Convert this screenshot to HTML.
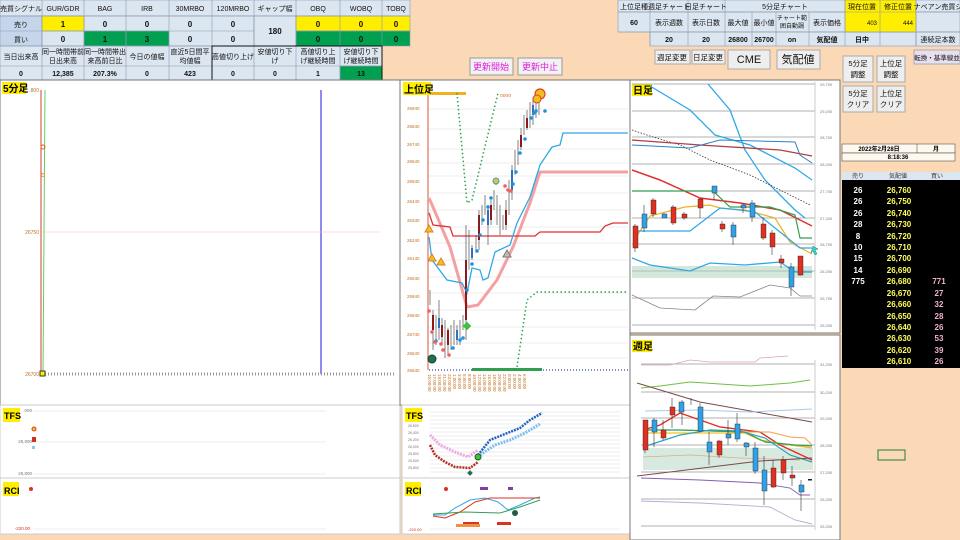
<!DOCTYPE html>
<html><head><meta charset="utf-8"><style>
html,body{margin:0;padding:0;background:#fcd9b6;}
svg{display:block;font-family:"Liberation Sans","Noto Sans CJK JP",sans-serif;}
</style></head><body>
<svg width="960" height="540" viewBox="0 0 960 540" xmlns="http://www.w3.org/2000/svg">
<rect width="960" height="540" fill="#fcd9b6"/>
<!-- ===== Top-left table ===== -->
<g stroke="#8a9ab0" stroke-width="0.6" font-size="7.5" text-anchor="middle">
<rect x="0" y="0" width="410" height="16" fill="#dce6f1"/>
<rect x="0" y="16" width="42" height="30" fill="#c5d5ea"/>
<rect x="42" y="16" width="212" height="30" fill="#dce6f1"/>
<rect x="42" y="16" width="42" height="15" fill="#ffee00"/>
<rect x="84" y="31" width="42" height="15" fill="#00a050"/>
<rect x="126" y="31" width="43" height="15" fill="#00a050"/>
<rect x="254" y="16" width="42" height="30" fill="#dce6f1"/>
<rect x="296" y="16" width="114" height="15" fill="#ffee00"/>
<rect x="296" y="31" width="114" height="15" fill="#00a050"/>
<rect x="0" y="46" width="382" height="34" fill="#dce6f1"/>
<rect x="340" y="66" width="42" height="14" fill="#00a050"/>
<path d="M0 16H410M0 31H254M296 31H410M0 46H382M0 66H382M42 0V80M84 0V80M126 0V80M169 0V80M212 0V80M254 0V80M296 0V80M340 0V80M382 0V80" fill="none"/>
<rect x="212" y="46" width="170" height="34" fill="none" stroke="#111" stroke-width="1"/>
</g>
<g font-size="7" text-anchor="middle" fill="#111">
<text x="21" y="11">売買シグナル</text><text x="63" y="11">GUR/GDR</text><text x="105" y="11">BAG</text><text x="147" y="11">IRB</text><text x="190" y="11">30MRBO</text><text x="233" y="11">120MRBO</text><text x="275" y="11">ギャップ幅</text><text x="318" y="11">OBQ</text><text x="361" y="11">WOBQ</text><text x="396" y="11">TOBQ</text>
<text x="21" y="27">売り</text><text x="21" y="42">買い</text>
<g font-weight="bold" font-size="8"><text x="63" y="27">1</text><text x="105" y="27">0</text><text x="147" y="27">0</text><text x="190" y="27">0</text><text x="233" y="27">0</text><text x="275" y="34">180</text><text x="318" y="27">0</text><text x="361" y="27">0</text><text x="396" y="27">0</text>
<text x="63" y="42">0</text><text x="105" y="42">1</text><text x="147" y="42">3</text><text x="190" y="42">0</text><text x="233" y="42">0</text><text x="318" y="42">0</text><text x="361" y="42">0</text><text x="396" y="42">0</text></g>
<text x="21" y="59">当日出来高</text><text x="63" y="54">同一時間帯前</text><text x="63" y="63">日出来高</text><text x="105" y="54">同一時間帯出</text><text x="105" y="63">来高前日比</text><text x="147" y="59">今日の値幅</text><text x="190" y="54">直近5日間平</text><text x="190" y="63">均値幅</text><text x="233" y="59">高値切り上げ</text><text x="275" y="54">安値切り下</text><text x="275" y="63">げ</text><text x="318" y="54">高値切り上</text><text x="318" y="63">げ継続時間</text><text x="361" y="54">安値切り下</text><text x="361" y="63">げ継続時間</text>
<g font-weight="bold" font-size="7"><text x="21" y="76">0</text><text x="63" y="76">12,385</text><text x="105" y="76">207.3%</text><text x="147" y="76">0</text><text x="190" y="76">423</text><text x="233" y="76">0</text><text x="275" y="76">0</text><text x="318" y="76">1</text><text x="361" y="76">13</text></g>
</g>
<!-- update buttons -->
<g font-size="9" text-anchor="middle" fill="#e020e0">
<rect x="470" y="58" width="43" height="17" fill="#f2f2f2" stroke="#999"/><text x="491" y="70">更新開始</text>
<rect x="518" y="58" width="44" height="17" fill="#f2f2f2" stroke="#999"/><text x="540" y="70">更新中止</text>
</g>
<!-- ===== Top-right table ===== -->
<g stroke="#8a9ab0" stroke-width="0.6">
<rect x="618" y="0" width="342" height="12" fill="#dce6f1"/>
<rect x="618" y="12" width="342" height="20" fill="#dce6f1"/>
<rect x="650" y="32" width="266" height="14" fill="#dce6f1"/>
<rect x="916" y="32" width="44" height="14" fill="#dce6f1"/>
<rect x="845" y="0" width="71" height="32" fill="#ffee00"/>
<path d="M618 12H960M618 32H960M650 0V46M688 0V46M725 0V46M752 12V46M776 12V46M809 12V46M845 0V46M880 0V46M916 0V46" fill="none"/>
</g>
<g font-size="7" text-anchor="middle" fill="#111">
<text x="634" y="9">上位足種</text><text x="669" y="9">週足チャート</text><text x="706" y="9">日足チャート</text><text x="785" y="9">5分足チャート</text><text x="862" y="9">現在位置</text><text x="898" y="9">修正位置</text><text x="938" y="9">ナベアン売買シ</text>
<text x="634" y="25" font-weight="bold">60</text><text x="669" y="25">表示週数</text><text x="706" y="25">表示日数</text><text x="738" y="25">最大値</text><text x="764" y="25">最小値</text><text x="792" y="20" font-size="6">チャート範</text><text x="792" y="28" font-size="6">囲自動調</text><text x="827" y="25">表示価格</text><text x="877" y="25" text-anchor="end" font-size="6">403</text><text x="913" y="25" text-anchor="end" font-size="6">444</text>
<g font-weight="bold"><text x="669" y="42">20</text><text x="706" y="42">20</text><text x="738" y="42">26800</text><text x="764" y="42">26700</text><text x="792" y="42">on</text><text x="827" y="42">気配値</text><text x="862" y="42">日中</text></g><text x="938" y="42">連続足本数</text>
</g>
<g font-size="7.5" text-anchor="middle" fill="#111">
<rect x="655" y="50" width="35" height="14" fill="#eee" stroke="#aaa"/><text x="672" y="60">週足変更</text>
<rect x="692" y="50" width="33" height="14" fill="#eee" stroke="#aaa"/><text x="708" y="60">日足変更</text>
<rect x="728" y="50" width="42" height="19" fill="#eee" stroke="#aaa"/><text x="749" y="63" font-size="11">CME</text>
<rect x="777" y="50" width="43" height="19" fill="#eee" stroke="#aaa"/><text x="798" y="63" font-size="11">気配値</text>
<rect x="843" y="56" width="30" height="26" fill="#eee" stroke="#aaa"/><text x="858" y="66">5分足</text><text x="858" y="77">調整</text>
<rect x="877" y="56" width="28" height="26" fill="#eee" stroke="#aaa"/><text x="891" y="66">上位足</text><text x="891" y="77">調整</text>
<rect x="843" y="86" width="30" height="26" fill="#eee" stroke="#aaa"/><text x="858" y="96">5分足</text><text x="858" y="107">クリア</text>
<rect x="877" y="86" width="28" height="26" fill="#eee" stroke="#aaa"/><text x="891" y="96">上位足</text><text x="891" y="107">クリア</text>
<rect x="914" y="50" width="46" height="14" fill="#e8e0f0" stroke="#aaa"/><text x="937" y="60" font-size="6.5">転換・基準線並</text>
</g>
<!-- ===== Left 5分足 chart ===== -->
<rect x="0" y="80" width="400" height="325" fill="#fff" stroke="#777"/>
<rect x="2" y="82" width="24" height="12" fill="#ffee00"/><text x="3" y="92" font-size="10" font-weight="bold">5分足</text>
<line x1="41" y1="90" x2="41" y2="374" stroke="#d04030"/>
<line x1="45" y1="90" x2="43" y2="374" stroke="#60d060"/>
<line x1="321" y1="90" x2="321" y2="374" stroke="#4040e0" stroke-width="1.2"/>
<line x1="42" y1="232" x2="380" y2="232" stroke="#f0c0c8" stroke-width="0.6"/>
<line x1="42" y1="374" x2="396" y2="374" stroke="#999" stroke-dasharray="1 2" stroke-width="3"/>
<circle cx="43" cy="147" r="2" fill="none" stroke="#e06020"/><circle cx="43" cy="175" r="1.5" fill="none" stroke="#f0a040"/>
<rect x="40" y="371" width="5" height="5" fill="#ffee00" stroke="#333"/>
<g font-size="5" fill="#c07020" text-anchor="end"><text x="39" y="92">.800</text><text x="39" y="234">26750</text><text x="39" y="376">26700</text></g>
<!-- left TFS -->
<rect x="0" y="405" width="400" height="73" fill="#fff" stroke="#ccc"/>
<rect x="3" y="408" width="17" height="14" fill="#ffee00"/><text x="4" y="419" font-size="9" font-weight="bold">TFS</text>
<path d="M33 411H326M33 442H326M33 474H326" stroke="#ddd" stroke-width="0.6"/>
<g font-size="4.5" fill="#777" text-anchor="end"><text x="32" y="412">.000</text><text x="32" y="443">26,900</text><text x="32" y="475">26,800</text></g>
<circle cx="34" cy="429" r="2" fill="#f0c020" stroke="#e04020"/><rect x="32" y="437" width="4" height="5" fill="#d03020"/><rect x="32" y="446" width="3" height="3" fill="#8cc8f0"/>
<!-- left RCI -->
<rect x="0" y="478" width="400" height="56" fill="#fff" stroke="#ccc"/>
<rect x="3" y="482" width="16" height="14" fill="#ffee00"/><text x="4" y="494" font-size="9" font-weight="bold">RCI</text>
<line x1="33" y1="529" x2="326" y2="529" stroke="#ddd" stroke-width="0.6"/>
<text x="30" y="530" font-size="4.5" fill="#d03020" text-anchor="end">-220.00</text>
<circle cx="31" cy="489" r="2" fill="#e03020"/>
<!-- ===== Middle 上位足 chart ===== -->
<rect x="400" y="80" width="230" height="325" fill="#fff" stroke="#777"/>
<g stroke="#ddd" stroke-width="0.6"><path d="M428 109H628M428 129H628M428 149H628M428 163H628M428 176H628M428 193H628M428 210H628M428 227H628M428 243H628M428 260H628M428 277H628M428 293H628M428 310H628M428 327H628M428 343H628M428 358H628"/></g>
<g font-size="4.5" fill="#c07020"><text x="407" y="110">26940</text><text x="407" y="128">26840</text><text x="407" y="146">26740</text><text x="407" y="163">26640</text><text x="407" y="183">26540</text><text x="407" y="203">26440</text><text x="407" y="222">26340</text><text x="407" y="242">26240</text><text x="407" y="260">26140</text><text x="407" y="280">26040</text><text x="407" y="298">25940</text><text x="407" y="317">25840</text><text x="407" y="336">25740</text><text x="407" y="355">25640</text><text x="407" y="372">25540</text></g>
<line x1="428" y1="92" x2="428" y2="370" stroke="#e07060" stroke-width="1.2"/>
<rect x="403" y="82" width="28" height="13" fill="#ffee00"/><text x="404" y="93" font-size="10" font-weight="bold">上位足</text>
<rect x="431" y="92" width="35" height="3" fill="#f0b020"/>
<polyline points="457,93 467,203 472,200 498,93" fill="none" stroke="#30a050" stroke-width="1.5" stroke-dasharray="1.5 2.5"/>
<polyline points="517,367 527,300 537,292 628,292" fill="none" stroke="#30a050" stroke-width="1.5" stroke-dasharray="1.5 2.5"/>
<polyline points="429,198 433,207 450,247 467,307 478,305 497,280 513,247 530,203 540,172 628,172" fill="none" stroke="#f4a0a0" stroke-width="3"/>
<polyline points="429,213 433,225 450,227 453,236 535,236 540,232 600,232 605,226 613,223 628,223" fill="none" stroke="#e03030" stroke-width="1.3"/>
<polyline points="429,237 432,260 447,280 462,283 467,293 472,268 480,270 483,280 488,278 495,252 510,245 517,223 530,197 540,165 552,147 560,145 563,133 628,133" fill="none" stroke="#30a8e8" stroke-width="1.3"/>
<g stroke="#333" stroke-width="0.6">
<path d="M430 290V305M433 310V350M436 315V345M439 300V340M442 318V345M445 320V358M448 328V355M451 325V350M454 320V345M457 325V345M460 320V345M463 315V330M466 225V340M469 230V270M472 245V260M476 235V250M479 210V250M482 205V225M485 195V215M488 205V245M491 200V225M494 190V210M497 195V225M500 205V235M503 215V230M506 200V230M509 180V215M512 165V200M515 150V175M518 140V165M521 128V150M524 115V135M527 110V130M530 102V128M533 98V125M536 95V118M539 95V115"/>
</g>
<g fill="#8b1a1a"><rect x="432" y="315" width="2" height="15"/><rect x="441" y="325" width="2" height="12"/><rect x="447" y="330" width="2" height="15"/><rect x="465" y="260" width="2" height="60"/><rect x="478" y="215" width="2" height="25"/><rect x="490" y="205" width="2" height="15"/><rect x="505" y="210" width="2" height="15"/><rect x="520" y="135" width="2" height="12"/><rect x="526" y="118" width="2" height="10"/></g>
<g fill="#3070c0"><rect x="438" y="318" width="2" height="10"/><rect x="456" y="330" width="2" height="10"/><rect x="471" y="248" width="2" height="10"/><rect x="487" y="210" width="2" height="15"/><rect x="511" y="170" width="2" height="20"/><rect x="532" y="105" width="2" height="10"/></g>
<g fill="#2090e0"><circle cx="463" cy="338" r="1.8"/><circle cx="467" cy="290" r="1.8"/><circle cx="472" cy="264" r="1.8"/><circle cx="477" cy="251" r="1.8"/><circle cx="480" cy="235" r="1.8"/><circle cx="483" cy="220" r="1.8"/><circle cx="488" cy="207" r="1.8"/><circle cx="491" cy="198" r="1.8"/><circle cx="496" cy="183" r="1.8"/><circle cx="513" cy="184" r="1.8"/><circle cx="516" cy="172" r="1.8"/><circle cx="520" cy="153" r="1.8"/><circle cx="525" cy="139" r="1.8"/><circle cx="531" cy="118" r="1.8"/><circle cx="534" cy="113" r="1.8"/><circle cx="536" cy="111" r="1.8"/><circle cx="545" cy="111" r="1.8"/><circle cx="436" cy="341" r="1.8"/><circle cx="453" cy="348" r="1.8"/><circle cx="460" cy="340" r="1.8"/></g>
<g fill="#f06060"><circle cx="429" cy="311" r="1.8"/><circle cx="432" cy="332" r="1.8"/><circle cx="435" cy="342" r="1.8"/><circle cx="441" cy="344" r="1.8"/><circle cx="443" cy="350" r="1.8"/><circle cx="449" cy="355" r="1.8"/><circle cx="505" cy="186" r="1.8"/><circle cx="508" cy="190" r="1.8"/><circle cx="511" cy="191" r="1.8"/></g>
<circle cx="432" cy="359" r="4" fill="#207050" stroke="#104030"/>
<rect x="464" y="323" width="6" height="6" fill="#40c040" transform="rotate(45 467 326)"/>
<path d="M429 225l4 7h-8z" fill="#f0c020" stroke="#e08020"/><path d="M432 254l4 7h-8z" fill="#f0c020" stroke="#e08020"/><path d="M441 258l4 7h-8z" fill="#f0c020" stroke="#e08020"/><path d="M507 250l4 7h-8z" fill="#c0c0b0" stroke="#777"/>
<circle cx="540" cy="94" r="5" fill="#f0c020" stroke="#e04020" stroke-width="1.2"/><circle cx="537" cy="99" r="4" fill="#f0c020" stroke="#e04020"/>
<circle cx="496" cy="181" r="3" fill="#f0c020" stroke="#30a0e0"/>
<text x="500" y="97" font-size="5" fill="#e07020">oooo</text>
<line x1="429" y1="370" x2="628" y2="370" stroke="#8090c0" stroke-dasharray="1 2" stroke-width="2"/>
<rect x="472" y="368" width="70" height="3" fill="#30a050"/>
<g font-size="4.5" fill="#c07020"><text transform="translate(428,374) rotate(90)">15:00:00</text><text transform="translate(433,374) rotate(90)">17:00:00</text><text transform="translate(438,374) rotate(90)">19:00:00</text><text transform="translate(443,374) rotate(90)">21:00:00</text><text transform="translate(448,374) rotate(90)">23:00:00</text><text transform="translate(453,374) rotate(90)">1:00:00</text><text transform="translate(458,374) rotate(90)">3:00:00</text><text transform="translate(463,374) rotate(90)">5:00:00</text><text transform="translate(468,374) rotate(90)">8:00:00</text><text transform="translate(473,374) rotate(90)">10:00:00</text><text transform="translate(478,374) rotate(90)">12:00:00</text><text transform="translate(483,374) rotate(90)">14:00:00</text><text transform="translate(488,374) rotate(90)">16:00:00</text><text transform="translate(493,374) rotate(90)">18:00:00</text><text transform="translate(498,374) rotate(90)">20:00:00</text><text transform="translate(503,374) rotate(90)">22:00:00</text><text transform="translate(508,374) rotate(90)">0:00:00</text><text transform="translate(513,374) rotate(90)">2:00:00</text><text transform="translate(518,374) rotate(90)">4:00:00</text><text transform="translate(523,374) rotate(90)">6:00:00</text></g>
<!-- middle TFS -->
<rect x="402" y="405" width="228" height="73" fill="#fff" stroke="#ccc"/>
<rect x="405" y="408" width="17" height="14" fill="#ffee00"/><text x="406" y="419" font-size="9" font-weight="bold">TFS</text>
<g stroke="#ddd" stroke-width="0.6"><path d="M430 412H620M430 416H620M430 420H620M430 424H620M430 428H620M430 432H620M430 436H620M430 440H620M430 444H620M430 448H620M430 452H620M430 456H620M430 460H620M430 464H620M430 468H620M430 472H620"/></g>
<g font-size="3.5" fill="#777"><text x="408" y="427">26,600</text><text x="408" y="434">26,400</text><text x="408" y="441">26,200</text><text x="408" y="448">26,000</text><text x="408" y="455">25,800</text><text x="408" y="462">25,600</text><text x="408" y="469">25,800</text></g>
<polyline points="430,435 440,445 455,452 468,457 478,450" fill="none" stroke="#f0a8e0" stroke-width="3" stroke-dasharray="2 1"/>
<polyline points="430,445 435,455 445,462 455,467 470,468 478,462" fill="none" stroke="#b03020" stroke-width="2.5" stroke-dasharray="2 1"/>
<polyline points="478,455 490,440 505,434 520,428 530,420 542,413" fill="none" stroke="#2060c0" stroke-width="2.5" stroke-dasharray="2 1"/>
<polyline points="480,455 495,445 510,440 525,433 540,424" fill="none" stroke="#80c0f0" stroke-width="3" stroke-dasharray="2 1"/>
<circle cx="478" cy="457" r="3" fill="#40c040" stroke="#206020"/><rect x="468" y="471" width="4" height="4" fill="#207050" transform="rotate(45 470 473)"/>
<!-- middle RCI -->
<rect x="402" y="478" width="228" height="56" fill="#fff" stroke="#ccc"/>
<rect x="405" y="482" width="16" height="14" fill="#ffee00"/><text x="406" y="494" font-size="9" font-weight="bold">RCI</text>
<line x1="430" y1="529" x2="620" y2="529" stroke="#ddd" stroke-width="0.6"/>
<text x="408" y="531" font-size="4" fill="#d03020">-220.00</text>
<polyline points="433,515 445,515 455,508 470,500 485,498 498,502 508,510 520,505 535,498 540,497" fill="none" stroke="#30a8e8" stroke-width="1"/>
<polyline points="433,516 445,518 460,512 475,502 490,498 540,498" fill="none" stroke="#e03020" stroke-width="1"/>
<polyline points="433,514 465,512 500,513 520,507 540,500" fill="none" stroke="#30a050" stroke-width="1"/>
<rect x="480" y="487" width="8" height="3" fill="#8040a0"/><rect x="508" y="487" width="5" height="3" fill="#8040a0"/>
<circle cx="446" cy="489" r="2" fill="#e03020"/><circle cx="515" cy="513" r="3" fill="#206040"/>
<rect x="456" y="524" width="24" height="3" fill="#f09040"/><rect x="463" y="522" width="16" height="2" fill="#e03020"/><rect x="497" y="522" width="14" height="3" fill="#e03020"/>
<!-- ===== 日足 chart ===== -->
<rect x="630" y="80" width="210" height="253" fill="#fff" stroke="#777"/>
<rect x="632" y="84" width="20" height="12" fill="#ffee00"/><text x="633" y="94" font-size="10" font-weight="bold">日足</text>
<g stroke="#999" stroke-width="0.8"><path d="M632 84H815M632 111H815M632 137H815M632 164H815M632 191H815M632 218H815M632 244H815M632 271H815M632 298H815M632 325H815"/></g>
<line x1="815" y1="82" x2="815" y2="330" stroke="#ccc"/>
<g font-size="4" fill="#777"><text x="820" y="86">29,700</text><text x="820" y="113">29,200</text><text x="820" y="139">28,700</text><text x="820" y="166">28,200</text><text x="820" y="193">27,700</text><text x="820" y="220">27,200</text><text x="820" y="246">26,700</text><text x="820" y="273">26,200</text><text x="820" y="300">25,700</text><text x="820" y="327">25,200</text></g>
<rect x="632" y="266" width="180" height="12" fill="#a8d0b8" opacity="0.5"/>
<polyline points="708,84 730,110 745,150 765,180 795,210 805,218" fill="none" stroke="#30a8e8" stroke-width="1.3"/>
<polyline points="650,86 690,110 715,135 750,145 795,168 812,180" fill="none" stroke="#30a8e8" stroke-width="1.3"/>
<polyline points="632,130 650,136 680,145 710,160 750,175 810,205" fill="none" stroke="#333" stroke-width="0.8" stroke-dasharray="1.5 1.5"/>
<polyline points="632,140 700,145 780,150 812,156" fill="none" stroke="#b04040" stroke-width="1.3"/>
<polyline points="632,145 690,148 720,140 795,142 800,155 812,163" fill="none" stroke="#3080c0" stroke-width="1"/>
<polyline points="632,170 660,180 700,198 740,203 780,210 812,226" fill="none" stroke="#e03030" stroke-width="1.5"/>
<polyline points="632,191 713,191 730,207 770,207 795,215 800,238 812,238" fill="none" stroke="#30a050" stroke-width="1.2"/>
<polyline points="634,240 650,216 685,207 710,205 720,208 745,210 775,218 790,242 812,254" fill="none" stroke="#f0b020" stroke-width="1.2"/>
<polyline points="634,231 650,231 690,231 720,208 740,210 755,212 790,240 800,248 812,248" fill="none" stroke="#30a8e8" stroke-width="1.3"/>
<polyline points="632,258 650,265 690,271 710,263 745,265 780,262 795,272 812,272" fill="none" stroke="#30a8e8" stroke-width="1.3"/>
<polyline points="632,295 660,308 695,310 713,296 740,297 770,285 790,288 800,296 812,296" fill="none" stroke="#8a8090" stroke-width="0.8"/>
<g stroke="#333" stroke-width="0.6"><path d="M635 224V252M644 205V232M653 198V217M664 213V218M673 205V225M684 212V220M700 198V218M714 186V200M722 221V232M733 222V245M743 203V213M752 200V222M763 217V240M772 230V255M781 255V268M791 263V296M800 256V276"/></g>
<g fill="#e03020" stroke="#222" stroke-width="0.4"><rect x="633" y="226" width="5" height="22"/><rect x="651" y="200" width="5" height="14"/><rect x="671" y="207" width="5" height="16"/><rect x="682" y="214" width="5" height="4"/><rect x="698" y="199" width="5" height="9"/><rect x="720" y="224" width="5" height="5"/><rect x="761" y="224" width="5" height="14"/><rect x="770" y="233" width="5" height="14"/><rect x="779" y="259" width="5" height="4"/><rect x="798" y="256" width="5" height="19"/></g>
<g fill="#30a0e8" stroke="#222" stroke-width="0.4"><rect x="642" y="214" width="5" height="14"/><rect x="662" y="214" width="5" height="4"/><rect x="712" y="186" width="5" height="7"/><rect x="731" y="225" width="5" height="12"/><rect x="741" y="205" width="5" height="3"/><rect x="750" y="203" width="5" height="14"/><rect x="789" y="267" width="5" height="20"/></g>
<path d="M813 246l5 3-3 1 2 4-2 1-2-4-2 2z" fill="#40d0c0" stroke="#208080" stroke-width="0.5"/>
<!-- ===== 週足 chart ===== -->
<rect x="630" y="335" width="210" height="205" fill="#fff" stroke="#777"/>
<rect x="632" y="340" width="20" height="12" fill="#ffee00"/><text x="633" y="350" font-size="10" font-weight="bold">週足</text>
<g stroke="#999" stroke-width="0.8"><path d="M641 364H815M641 392H815M641 418H815M641 445H815M641 472H815M641 499H815M641 526H815"/></g>
<line x1="815" y1="360" x2="815" y2="530" stroke="#ccc"/>
<g font-size="4" fill="#777"><text x="820" y="366">31,200</text><text x="820" y="394">30,200</text><text x="820" y="420">29,200</text><text x="820" y="447">28,200</text><text x="820" y="474">27,200</text><text x="820" y="501">26,200</text><text x="820" y="528">25,200</text></g>
<rect x="643" y="448" width="170" height="22" fill="#a8d0b8" opacity="0.45"/>
<polyline points="641,365 670,365 690,360 710,362 755,362 760,358 788,356" fill="none" stroke="#e0a0b0" stroke-width="0.8"/>
<polyline points="641,388 660,386 690,382 750,386 790,383 810,380" fill="none" stroke="#70c040" stroke-width="1"/>
<polyline points="637,383 700,402 812,422" fill="none" stroke="#7a4a4a" stroke-width="1"/>
<polyline points="645,411 700,410 750,412 812,409" fill="none" stroke="#a8c8e8" stroke-width="1"/>
<polyline points="643,430 660,425 680,413 700,420 720,427 760,432 780,445 812,460" fill="none" stroke="#e03020" stroke-width="1.4"/>
<polyline points="643,430 680,430 740,432 770,432 790,437 805,438 812,445" fill="none" stroke="#f0a040" stroke-width="1"/>
<polyline points="643,433 700,433 745,433 760,440 790,445 812,448" fill="none" stroke="#f0c020" stroke-width="1.3"/>
<polyline points="643,430 680,430 745,432 765,442 795,445 812,446" fill="none" stroke="#30a050" stroke-width="1.2"/>
<polyline points="643,447 680,435 710,430 740,431 765,438 790,455 812,462" fill="none" stroke="#30a0b8" stroke-width="1.2"/>
<polyline points="643,457 690,455 740,458 800,460" fill="none" stroke="#d0b090" stroke-width="0.8"/>
<polyline points="637,476 760,461 812,458" fill="none" stroke="#7a4a4a" stroke-width="1"/>
<polyline points="641,478 700,480 760,483 790,488 800,495 810,495" fill="none" stroke="#8060b0" stroke-width="0.9"/>
<polyline points="641,501 700,503 770,507 795,520 812,524" fill="none" stroke="#b0b0d8" stroke-width="0.9"/>
<g stroke="#333" stroke-width="0.6"><path d="M645 420V453M654 418V447M663 420V440M672 398V428M682 400V425M691 398V405M700 403V432M709 432V465M719 440V458M728 420V445M737 413V442M746 442V456M755 442V474M764 456V505M773 460V488M783 456V480M792 466V486M801 480V511"/></g>
<g fill="#e03020" stroke="#222" stroke-width="0.4"><rect x="643" y="420" width="5" height="30"/><rect x="661" y="430" width="5" height="8"/><rect x="670" y="407" width="5" height="8"/><rect x="717" y="441" width="5" height="14"/><rect x="771" y="468" width="5" height="19"/><rect x="781" y="460" width="5" height="13"/><rect x="790" y="475" width="5" height="3"/></g>
<g fill="#30a0e8" stroke="#222" stroke-width="0.4"><rect x="652" y="420" width="5" height="12"/><rect x="679" y="402" width="5" height="10"/><rect x="698" y="407" width="5" height="24"/><rect x="707" y="442" width="5" height="10"/><rect x="726" y="434" width="5" height="4"/><rect x="735" y="424" width="5" height="15"/><rect x="744" y="443" width="5" height="4"/><rect x="753" y="448" width="5" height="23"/><rect x="762" y="470" width="5" height="21"/><rect x="799" y="485" width="5" height="7"/></g>
<rect x="808" y="479" width="4" height="1.5" fill="#222"/>
<!-- ===== order book ===== -->
<rect x="842" y="144" width="113" height="9" fill="#fff8ee" stroke="#555" stroke-width="0.6"/>
<line x1="917" y1="144" x2="917" y2="153" stroke="#555" stroke-width="0.6"/>
<rect x="842" y="153" width="113" height="8" fill="#fff8ee" stroke="#555" stroke-width="0.6"/>
<g font-size="6" font-weight="bold" text-anchor="middle"><text x="879" y="151">2022年2月28日</text><text x="936" y="151">月</text><text x="898" y="159">8:18:36</text></g>
<rect x="842" y="172" width="118" height="196" fill="#000"/>
<rect x="842" y="172" width="118" height="8" fill="#dce6f1"/>
<g font-size="6" text-anchor="middle" fill="#333"><text x="858" y="178">売り</text><text x="898" y="178">気配値</text><text x="937" y="178">買い</text></g>
<g font-size="8" font-weight="bold" text-anchor="middle">
<g fill="#fff"><text x="858" y="193">26</text><text x="858" y="204">26</text><text x="858" y="216">26</text><text x="858" y="227">28</text><text x="858" y="239">8</text><text x="858" y="250">10</text><text x="858" y="261">15</text><text x="858" y="273">14</text><text x="858" y="284">775</text></g>
<g fill="#ffff60"><text x="899" y="193">26,760</text><text x="899" y="204">26,750</text><text x="899" y="216">26,740</text><text x="899" y="227">26,730</text><text x="899" y="239">26,720</text><text x="899" y="250">26,710</text><text x="899" y="261">26,700</text><text x="899" y="273">26,690</text><text x="899" y="284">26,680</text><text x="899" y="296">26,670</text><text x="899" y="307">26,660</text><text x="899" y="319">26,650</text><text x="899" y="330">26,640</text><text x="899" y="341">26,630</text><text x="899" y="353">26,620</text><text x="899" y="364">26,610</text></g>
<g fill="#f0b0d0"><text x="939" y="284">771</text><text x="939" y="296">27</text><text x="939" y="307">32</text><text x="939" y="319">28</text><text x="939" y="330">26</text><text x="939" y="341">53</text><text x="939" y="353">39</text><text x="939" y="364">26</text></g>
</g>
<rect x="878" y="450" width="27" height="10" fill="none" stroke="#208040"/>
</svg>
</body></html>
